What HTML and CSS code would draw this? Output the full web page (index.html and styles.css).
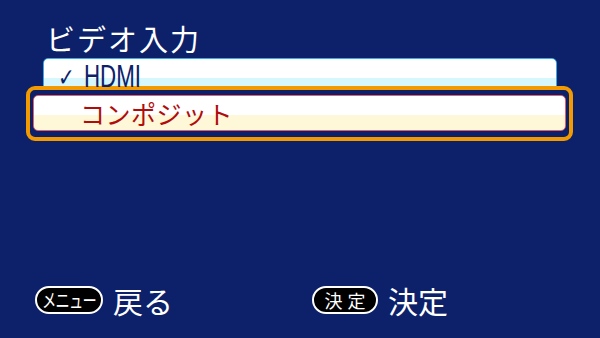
FILE: index.html
```html
<!DOCTYPE html>
<html lang="ja">
<head>
    <meta charset="UTF-8">
    <meta name="viewport" content="width=device-width, initial-scale=1.0">
    <title>ビデオ入力</title>
    <link rel="stylesheet" href="styles.css">
</head>
<body>
    <div class="screen">
        <h1 class="title">ビデオ入力</h1>

        <div class="menu">
            <div class="option">
                <span class="check">✓</span>
                <span class="latin">HDMI</span>
            </div>
            <div class="focus">
                <div class="option selected">
                    <span class="label">コンポジット</span>
                </div>
            </div>
        </div>

        <div class="footer">
            <div class="hint back">
                <span class="key key-menu"><span class="key-text">メニュー</span></span>
                <span class="action">戻る</span>
            </div>
            <div class="hint">
                <span class="key key-ok">決定</span>
                <span class="action">決定</span>
            </div>
        </div>
    </div>
</body>
</html>
```

FILE: styles.css
```css
* { margin: 0; padding: 0; box-sizing: border-box; }
body { background: #0c216a; font-family: 'Noto Sans CJK JP', 'Noto Sans', sans-serif; color: white; }
.screen { width: 600px; height: 338px; display: flex; flex-direction: column; }

.title { font-size: 29px; font-weight: 400; letter-spacing: 2px; line-height: 34px; margin: 21px 0 0 46px; }

.menu { display: flex; flex-direction: column; margin-top: 3px; }
.option { height: 36px; margin: 0 43px; border: 1px solid #3aa8e4; border-radius: 5px; display: flex; align-items: flex-start; padding: 3px 0 0 12px; color: #0c216a; background: linear-gradient(to bottom, #ffffff 0, #ffffff 55%, #d6f7fc 55%, #d6f7fc 100%); }
.check { font-family: 'DejaVu Sans', sans-serif; font-size: 25px; font-weight: bold; line-height: 28px; margin-top: 2px; transform: scaleX(0.8); }
.latin { display: inline-block; font-family: 'Liberation Sans', Arial, sans-serif; font-size: 31px; line-height: 30px; margin-left: 7px; transform: scaleX(0.72); transform-origin: left top; }

.focus { margin: -8px 27px 0 26px; border: 4px solid #f29a00; border-radius: 9px; padding: 5px 3px 6px 3px; background: #0c216a; }
.selected { margin: 0; border-color: #e4606c; padding: 0 0 0 46px; align-items: center; background: linear-gradient(to bottom, #ffffff 0, #ffffff 55%, #fff8d8 55%, #fff8d8 100%); }
.label { color: #b00c0c; font-size: 25px; line-height: 30px; letter-spacing: 0.5px; }

.footer { margin-top: auto; display: flex; padding: 0 0 22px 35px; }
.hint { display: flex; align-items: center; }
.back { width: 277px; }
.key { height: 28px; border: 2px solid white; border-radius: 14px; background: black; display: flex; align-items: center; justify-content: center; }
.key-menu { width: 68px; }
.key-text { display: inline-block; font-size: 19px; line-height: 20px; letter-spacing: -1px; transform: scaleX(0.75); white-space: nowrap; }
.key-ok { width: 66px; font-size: 18px; letter-spacing: 5px; padding-left: 5px; }
.action { font-size: 30px; line-height: 32px; margin-left: 10px; }
```
